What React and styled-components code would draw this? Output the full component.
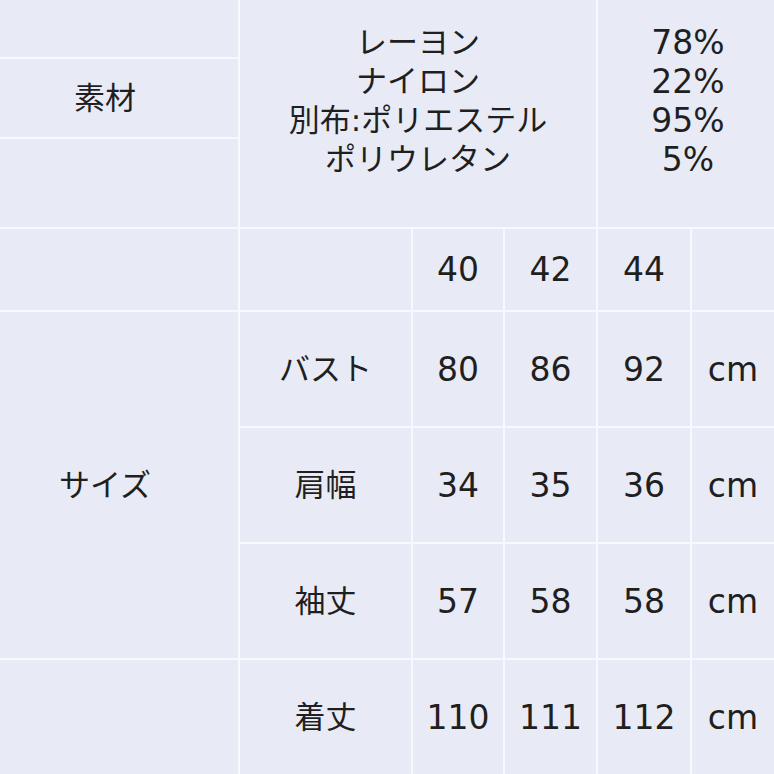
import styled, { createGlobalStyle } from "styled-components";

const GlobalStyle = createGlobalStyle`
  html, body {
    margin: 0;
    padding: 0;
    background: #e8ebf5;
  }
  body {
    font-family: "DejaVu Sans", "Noto Sans CJK JP", sans-serif;
    color: #1f1f22;
  }
`;

const Table = styled.div`
  width: 774px;
  height: 774px;
  display: grid;
  grid-template-columns: 238px 171px 90px 91px 92px 82px;
  grid-template-rows: 57px 78px 88px 81px 114px 114px 114px 114px;
  gap: 2px;
  background: #f8f9fd;
  overflow: hidden;
`;

const Cell = styled.div`
  background: #e8ebf5;
  display: flex;
  align-items: center;
  justify-content: center;
  font-size: ${(p) => (p.$num ? 33 : 31)}px;
  line-height: 1;
  grid-column: ${(p) => p.$col || "auto"};
  grid-row: ${(p) => p.$row || "auto"};
  padding-right: ${(p) => p.$shift || 0}px;
`;

const Stack = styled.div`
  background: #e8ebf5;
  display: flex;
  flex-direction: column;
  align-items: center;
  padding-top: 23px;
  font-size: ${(p) => (p.$num ? 33 : 31)}px;
  grid-column: ${(p) => p.$col};
  grid-row: 1 / 4;
  padding-left: ${(p) => p.$shift || 0}px;
`;

const Line = styled.div`
  height: 39px;
  line-height: 39px;
  white-space: nowrap;
`;

const materials = ["レーヨン", "ナイロン", "別布:ポリエステル", "ポリウレタン"];
const percents = ["78%", "22%", "95%", "5%"];

const sizes = ["40", "42", "44"];
const rows = [
  { label: "バスト", values: ["80", "86", "92"] },
  { label: "肩幅", values: ["34", "35", "36"] },
  { label: "袖丈", values: ["57", "58", "58"] },
  { label: "着丈", values: ["110", "111", "112"] },
];

export default function App() {
  return (
    <>
      <GlobalStyle />
      <Table>
        <Cell $col="1" $row="1" />
        <Cell $col="1" $row="2" $shift={28}>素材</Cell>
        <Cell $col="1" $row="3" />
        <Stack $col="2 / 5">
          {materials.map((m) => (
            <Line key={m}>{m}</Line>
          ))}
        </Stack>
        <Stack $col="5 / 7" $shift={4} $num>
          {percents.map((p) => (
            <Line key={p}>{p}</Line>
          ))}
        </Stack>

        <Cell $col="1" $row="4" />
        <Cell $col="2" $row="4" />
        {sizes.map((s, i) => (
          <Cell key={s} $col={String(i + 3)} $row="4" $num>
            {s}
          </Cell>
        ))}
        <Cell $col="6" $row="4" />

        <Cell $col="1" $row="5 / 8" $shift={28}>サイズ</Cell>
        <Cell $col="1" $row="8" />
        {rows.map((r, ri) => (
          <>
            <Cell key={r.label} $col="2" $row={String(ri + 5)}>
              {r.label}
            </Cell>
            {r.values.map((v, vi) => (
              <Cell key={r.label + vi} $col={String(vi + 3)} $row={String(ri + 5)} $num>
                {v}
              </Cell>
            ))}
            <Cell key={r.label + "cm"} $col="6" $row={String(ri + 5)} $num>
              cm
            </Cell>
          </>
        ))}
      </Table>
    </>
  );
}
